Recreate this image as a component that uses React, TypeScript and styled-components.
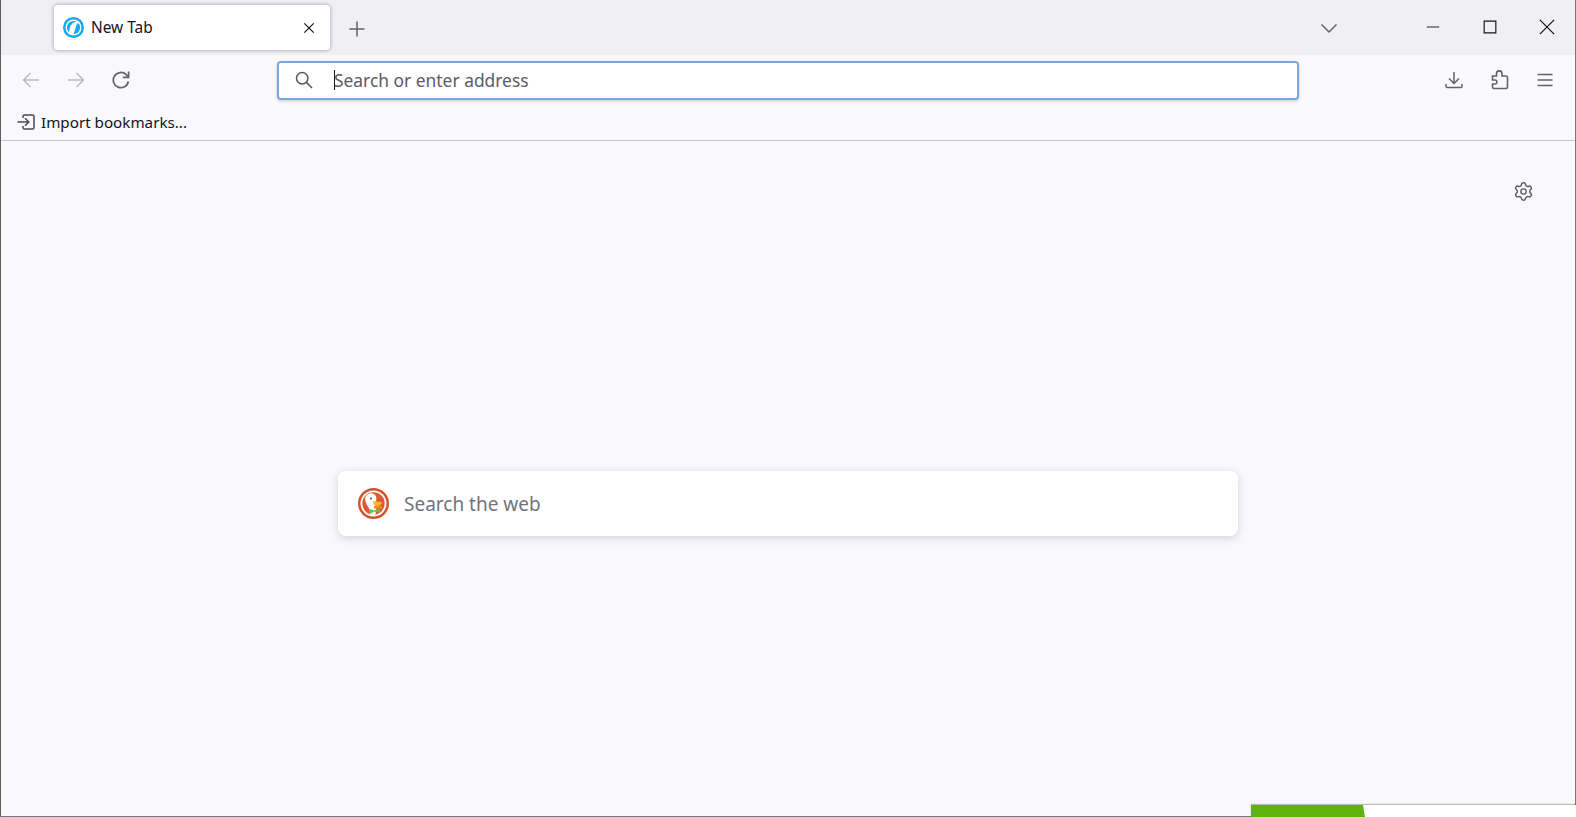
import React from 'react';
import styled, { createGlobalStyle } from 'styled-components';
import { Settings } from 'lucide-react';

const GlobalStyle = createGlobalStyle`
  html, body {
    margin: 0;
    padding: 0;
    width: 100%;
    height: 100%;
    overflow: hidden;
    background: #ffffff;
  }
  * {
    box-sizing: border-box;
  }
`;

const Window = styled.div`
  position: relative;
  display: flex;
  flex-direction: column;
  width: 1576px;
  height: 817px;
  background: #f9f9fb;
  border-left: 1px solid #5c5f5c;
  border-right: 1px solid #77777a;
  border-bottom: 1px solid #77777a;
  font-family: 'Noto Sans', 'Open Sans', sans-serif;
  color: #15141a;
`;

const TitleBar = styled.header`
  display: flex;
  align-items: flex-start;
  height: 55px;
  padding-left: 53px;
  background: #f0f0f4;
`;

const Tab = styled.div`
  display: flex;
  align-items: center;
  width: 276px;
  height: 45px;
  margin-top: 5px;
  padding: 0 14px 0 9px;
  background: #ffffff;
  border-radius: 4px;
  box-shadow: 0 0 4px rgba(0, 0, 0, 0.35);
`;

const TabTitle = styled.span`
  flex: 1;
  margin: 0 0 0 7px;
  font-size: 15.4px;
`;

const IconButton = styled.button<{ $width?: number; $height?: number; $color?: string }>`
  display: flex;
  align-items: center;
  justify-content: center;
  flex: none;
  width: ${(p) => p.$width ?? 45}px;
  height: ${(p) => p.$height ?? 45}px;
  padding: 0;
  border: 0;
  background: transparent;
  color: ${(p) => p.$color ?? '#62626c'};
`;

const TabClose = styled(IconButton)`
  width: 14px;
  height: 14px;
`;

const NewTab = styled(IconButton)`
  margin: 6px 0 0 4px;
`;

const Spacer = styled.div`
  flex: 1;
`;

const TabList = styled(IconButton)`
  margin-top: 5px;
  margin-right: 53px;
`;

const WindowButton = styled(IconButton)`
  width: 57px;
  height: 54px;
`;

const Toolbar = styled.nav`
  display: flex;
  align-items: center;
  height: 50px;
  padding: 0 7px;
`;

const AddressBar = styled.div`
  display: flex;
  align-items: center;
  width: 1022px;
  height: 39px;
  margin-left: 134px;
  padding-left: 16px;
  background: #ffffff;
  border: 2px solid #7ba7dd;
  border-radius: 4px;
  box-shadow: 0 1px 3px rgba(0, 0, 0, 0.2);
  color: #55555f;
`;

const Caret = styled.span`
  width: 1px;
  height: 20px;
  margin-left: 21px;
  background: #15141a;
`;

const AddressText = styled.span`
  margin-left: -1px;
  font-size: 17.4px;
  color: #5b5b66;
`;

const ToolbarEnd = styled.div`
  display: flex;
  align-items: center;
  margin-left: auto;
  padding-right: 1px;
`;

const BookmarksBar = styled.div`
  display: flex;
  align-items: center;
  gap: 6px;
  height: 36px;
  padding: 0 0 1px 16px;
  font-size: 15.2px;
  border-bottom: 1px solid #c8c8cc;
`;

const BookmarkIcon = styled.span`
  display: flex;
  color: #4a4a52;
`;

const Content = styled.main`
  flex: 1;
  display: flex;
  flex-direction: column;
  align-items: center;
`;

const SettingsRow = styled.div`
  align-self: stretch;
  display: flex;
  justify-content: flex-end;
  padding: 40px 41px 0 0;
  color: #5b5b66;
`;

const SearchCard = styled.div`
  display: flex;
  align-items: center;
  gap: 15px;
  width: 900px;
  height: 65px;
  margin-top: 269px;
  padding-left: 20px;
  background: #ffffff;
  border-radius: 8px;
  box-shadow: 0 2px 8px rgba(58, 57, 68, 0.2);
  font-size: 19px;
  color: #73737c;
`;

const TaskStrip = styled.div`
  position: absolute;
  left: 1250px;
  right: -1px;
  bottom: -1px;
  height: 12px;
  background: #ffffff;
  box-shadow: 0 -1px 1px rgba(0, 0, 0, 0.25);
`;

const TaskTab = styled.div`
  width: 114px;
  height: 12px;
  background: #5fb30a;
  clip-path: polygon(0 0, 112px 0, 114px 100%, 0 100%);
`;

const Line = ({ size = 18, width = 1.5, children }: { size?: number; width?: number; children: React.ReactNode }) => (
  <svg width={size} height={size} viewBox="0 0 18 18" fill="none" stroke="currentColor" strokeWidth={width}>
    {children}
  </svg>
);

const PuzzleIcon = () => (
  <svg width="20" height="20" viewBox="0 0 20 20" fill="none" stroke="currentColor" strokeWidth="1.6">
    <path d="M2.5 6H6.5V3.5C6.5 0 12 0 12 3.5V6H16C17 6 17.5 6.5 17.5 7.5V17C17.5 18 17 18.5 16 18.5H4C3 18.5 2.5 18 2.5 17V14H5C7.5 14 7.5 10 5 10H2.5Z" />
  </svg>
);

const Favicon = () => (
  <svg width="21" height="21" viewBox="0 0 21 21">
    <circle cx="10.5" cy="10.5" r="10.5" fill="#12aaee" />
    <circle cx="10.5" cy="10.5" r="8" fill="#ffffff" />
    <circle cx="10.5" cy="10.5" r="6.6" fill="#12aaee" />
    <path d="M5.5 17C7 12.5 6 9 10 6C12.5 4.5 15 4.5 16.5 5.5C14.5 6 13.5 7.5 13 9.5C12.5 12 11.5 14 10.5 17.5Z" fill="#ffffff" />
  </svg>
);

const DuckLogo = () => (
  <svg width="31" height="31" viewBox="0 0 31 31">
    <circle cx="15.5" cy="15.5" r="15.5" fill="#d5512f" />
    <circle cx="15.5" cy="15.5" r="13" fill="#ffffff" />
    <circle cx="15.5" cy="15.5" r="11.2" fill="#de5833" />
    <path d="M7.5 9C10 4.5 16 4 18 8.5C19 11 17.5 14 18 18C18.5 22 18 25 17 27L12 26.5C13 22 10 19 8.5 16C7.5 13.5 6.5 11 7.5 9Z" fill="#ffffff" />
    <circle cx="13" cy="10.5" r="1" fill="#2d4f8e" />
    <path d="M15 13L23.5 14C24.5 16 22 18 18 18L16 17Z" fill="#fdb813" />
    <path d="M16 18H24V20.5H16Z" fill="#f08a1d" />
    <path d="M11 21L16 22.5L22 20.5V25L16 23.5L11 26.5Z" fill="#67bd45" />
  </svg>
);

const App: React.FC = () => {
  return (
    <Window>
      <GlobalStyle />
      <TitleBar>
        <Tab>
          <Favicon />
          <TabTitle>New Tab</TabTitle>
          <TabClose $color="#15141a">
            <Line size={14} width={1.6}>
              <path d="M3 3L15 15M15 3L3 15" />
            </Line>
          </TabClose>
        </Tab>
        <NewTab>
          <Line size={18}>
            <path d="M9 1.5V16.5M1.5 9H16.5" />
          </Line>
        </NewTab>
        <Spacer />
        <TabList>
          <Line size={18}>
            <path d="M1.5 5.5L9 13L16.5 5.5" />
          </Line>
        </TabList>
        <WindowButton $color="#15141a">
          <Line size={14} width={1.2}>
            <path d="M1 9H17" />
          </Line>
        </WindowButton>
        <WindowButton $color="#15141a">
          <Line size={14} width={1.5}>
            <path d="M1.5 1.5H16.5V16.5H1.5Z" />
          </Line>
        </WindowButton>
        <WindowButton $color="#15141a">
          <Line size={16} width={1.4}>
            <path d="M1 1L17 17M17 1L1 17" />
          </Line>
        </WindowButton>
      </TitleBar>
      <Toolbar>
        <IconButton $color="#b9b9bf">
          <Line>
            <path d="M17 9H1.5M8.5 2L1.5 9L8.5 16" />
          </Line>
        </IconButton>
        <IconButton $color="#b9b9bf">
          <Line>
            <path d="M1 9H16.5M9.5 2L16.5 9L9.5 16" />
          </Line>
        </IconButton>
        <IconButton>
          <Line width={1.7}>
            <path d="M16.4 10.5A7.6 7.6 0 1 1 14.2 3.6L16.2 5.8" />
            <path d="M16.6 0.5V6.4H10.8" />
          </Line>
        </IconButton>
        <AddressBar>
          <Line>
            <circle cx="7.2" cy="7.2" r="5.7" />
            <path d="M11.4 11.4L17 17" />
          </Line>
          <Caret />
          <AddressText>Search or enter address</AddressText>
        </AddressBar>
        <ToolbarEnd>
          <IconButton $width={46}>
            <Line>
              <path d="M9 1V12M4 7.5L9 12.5L14 7.5" />
              <path d="M1 13V15.2C1 16 1.6 16.5 2.4 16.5H15.6C16.4 16.5 17 16 17 15.2V13" />
            </Line>
          </IconButton>
          <IconButton $width={46}>
            <PuzzleIcon />
          </IconButton>
          <IconButton $width={44}>
            <Line>
              <path d="M1.5 3.5H16.5M1.5 9H16.5M1.5 14.5H16.5" />
            </Line>
          </IconButton>
        </ToolbarEnd>
      </Toolbar>
      <BookmarksBar>
        <BookmarkIcon>
          <Line>
            <path d="M6 5V3.5C6 2.7 6.6 2 7.5 2H15.5C16.4 2 17 2.7 17 3.5V14.5C17 15.3 16.4 16 15.5 16H7.5C6.6 16 6 15.3 6 14.5V13" />
            <path d="M0.5 9H11.5M8 5.2L11.8 9L8 12.8" />
          </Line>
        </BookmarkIcon>
        Import bookmarks...
      </BookmarksBar>
      <Content>
        <SettingsRow>
          <Settings size={21} strokeWidth={1.6} />
        </SettingsRow>
        <SearchCard>
          <DuckLogo />
          Search the web
        </SearchCard>
      </Content>
      <TaskStrip>
        <TaskTab />
      </TaskStrip>
    </Window>
  );
};

export default App;
